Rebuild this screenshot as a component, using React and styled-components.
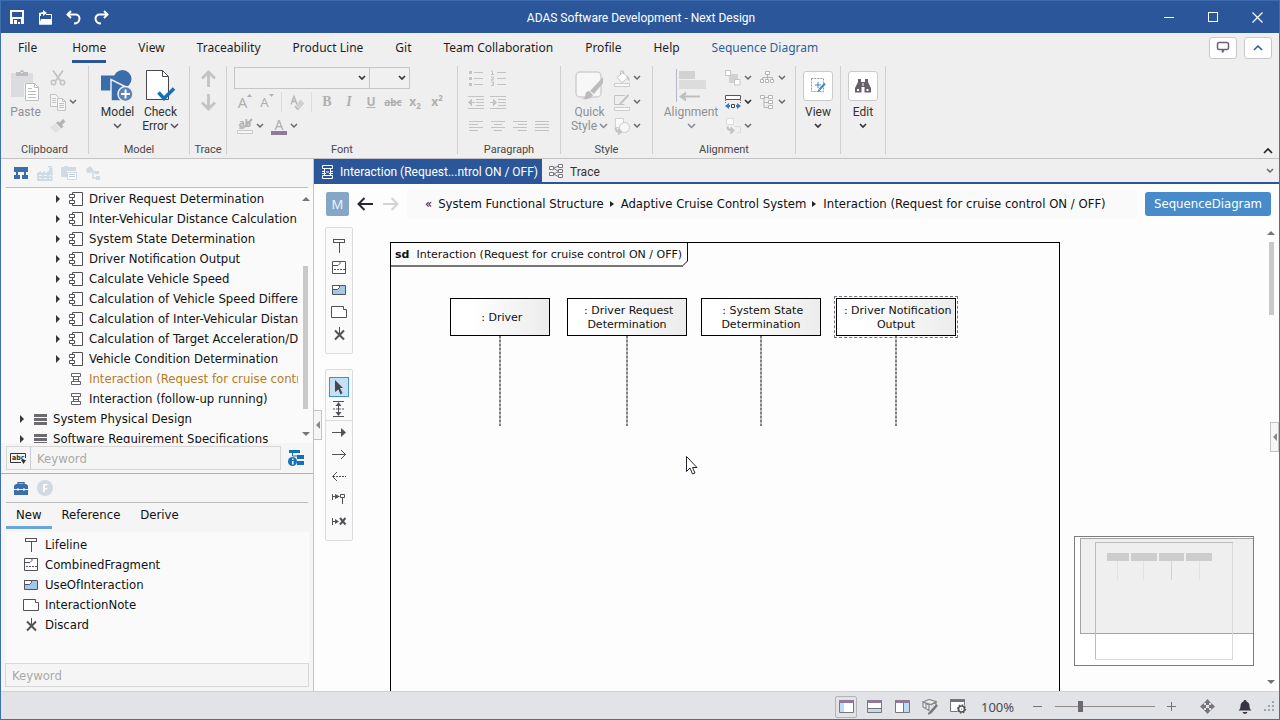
import React, {useState} from 'react';
import styled, {createGlobalStyle} from 'styled-components';

const UI = "'Noto Sans', 'Open Sans', sans-serif";
const RIBBON = "Roboto, 'Noto Sans', sans-serif";
const TEXT = "'DejaVu Sans Condensed', 'DejaVu Sans', sans-serif";
const DIAGRAM = "'DejaVu Sans', sans-serif";

const GlobalStyle = createGlobalStyle`
  * { box-sizing: border-box; }
  html, body, #root { height: 100%; }
  body { margin: 0; font: 12px/16px ${UI}; color: #1e1e1e; overflow: hidden; }
  button { border: 0; padding: 0; background: none; font: inherit; color: inherit; }
  input, select { font: inherit; color: inherit; outline: 0; }
  a { color: inherit; text-decoration: none; }
  ul, ol { margin: 0; padding: 0; list-style: none; }
  svg { display: block; flex: none; }
`;

/* ---------- icons: [width, height, drawing] ---------- */

const G = '#c3c3c3';
const GL = '#dadcdf';
const D = '#555057';
const B = '#3b6cab';

const line = (stroke, d, w = 1, extra = {}) => <path d={d} fill='none' stroke={stroke} strokeWidth={w} {...extra} />;
const fill = (color, d) => <path d={d} fill={color} />;
const crisp = {shapeRendering: 'crispEdges'};

const lifeline = (
  <>
    <rect x='1.5' y='0.5' width='11' height='3' fill='#fff' stroke={D} />
    {line(D, 'M7.5 4v10')}
  </>
);

const ICONS = {
  save: [14, 14, <>{fill('#fff', 'M0 0h14v14H0z')}{fill('#2b579a', 'M2 2h10v5H2zM3 9h8v5H3z')}{fill('#fff', 'M4 10h3v4H4zM8 12h2v2H8z')}</>],
  open: [15, 15, <>{line('#fff', 'M1.5 5v9h12V4.500H8', 1)}{fill('#fff', 'M3 9h11v5.500H1z M5 0l4 3-4 3V4H3v2H1V3l4-1z')}</>],
  undo: [15, 15, line('#fff', 'M5 1L1.500 4.500 5 8M2 4.500h7.500a4 4 0 0 1 4 4c0 3-2.500 5-5.500 5', 2)],
  redo: [15, 15, line('#fff', 'M10 1l3.500 3.500L10 8M13 4.500H5.500a4 4 0 0 0-4 4c0 3 2.500 5 5.500 5', 2)],
  min: [10, 10, line('#fff', 'M0 5.500h10', 1, crisp)],
  max: [11, 11, line('#fff', 'M0.500 0.500h9v9h-9z', 1, crisp)],
  close: [11, 11, line('#fff', 'M0.500 0.500l10 10M10.500 0.500l-10 10', 1.2)],
  chevron: [8, 6, line('#6a6572', 'M1 1l3 3 3-3', 1.5)],
  chevronDark: [8, 6, line('#39343f', 'M1 1l3 3 3-3', 1.7)],
  chevronBig: [9, 6, line('#55505a', 'M1 1l3.500 3.500L8 1', 1.5)],
  chevronBigOff: [9, 6, line('#8a878e', 'M1 1l3.500 3.500L8 1', 1.5)],
  chevronUp: [10, 6, line('#222', 'M1 5l4-4 4 4', 1.7)],
  chevronUpBlue: [10, 6, line('#2b579a', 'M1 5l4-4 4 4', 1.5)],
  comment: [14, 14, line('#6a6070', 'M3 1.500h8a1.500 1.500 0 0 1 1.500 1.500v4a1.500 1.500 0 0 1-1.500 1.500H8L6.500 11.500V8.500H3A1.500 1.500 0 0 1 1.500 7V3A1.500 1.500 0 0 1 3 1.500z', 1.5)],
  paste: [29, 32, <>
    {fill(GL, 'M0 3h22v10h-9v14H0z')}
    {fill('#bdbdbd', 'M5 2h4a2 2 0 0 1 4 0h4v4H5z')}
    {fill('#efefef', 'M10 2h2v1h-2z')}
    <path d='M14.500 13.500h9l4 4v13h-13z' fill='#fff' stroke='#bbb' />
    {line('#bbb', 'M23.500 13.500v4h4M17 18.500h4M17 21.500h8M17 24.500h8M17 27.500h8')}
  </>],
  cut: [16, 16, <>{line(G, 'M3 0.500l7.500 10.500M13 0.500L5.500 11', 1.8)}<circle cx='3.500' cy='12.500' r='2.200' fill='none' stroke={G} strokeWidth='1.500' /><circle cx='12.500' cy='12.500' r='2.200' fill='none' stroke={G} strokeWidth='1.500' /></>],
  copy: [17, 17, <>
    <path d='M0.500 0.500h5l3 3v9h-8z' fill='#f4f4f4' stroke={G} />
    {line(G, 'M2 4.500h4M2 6.500h4M2 8.500h4')}
    <path d='M7.500 4.500h5l3 3v9h-8z' fill='#f4f4f4' stroke={G} />
    {line(G, 'M12.500 4.500v3h3M9 9.500h5M9 11.500h5M9 13.500h5')}
  </>],
  brush: [16, 14, <>{fill('#b4b4b4', 'M13 0l2.500 2.500L12 6l1.500 1.500-2 2L6 4l2-2 1.500 1.500z')}{fill('#dfe1e4', 'M5 4.500l5.500 5.500L6 14 0 8.500z')}</>],
  model: [33, 32, <>
    <circle cx='21.500' cy='9' r='9' fill={B} />
    <path d='M0 5.500h16v15H0z' fill={B} />
    <path d='M10 31V9.500L28 18.500V31z' fill={B} stroke='#efefef' strokeWidth='1.500' />
    <path d='M20 31h12V24H20z' fill='#efefef' />
    <circle cx='24.500' cy='24' r='7.500' fill='#5b82b8' stroke='#efefef' strokeWidth='1.500' />
    {line('#fff', 'M24.500 19.500v9M20 24h9', 2)}
  </>],
  check: [30, 31, <>
    <path d='M0.500 0.500h16l6 6v23h-22z' fill='#fff' stroke='#4a454c' />
    {line('#4a454c', 'M16.500 0.500v6h6')}
    {line('#1670b8', 'M12.500 22.500l5.500 6L28 18.500', 3.5)}
  </>],
  up: [15, 17, line(G, 'M7.500 17V2M1 8.500L7.500 2 14 8.500', 2.8)],
  down: [15, 17, line(G, 'M7.500 0v15M1 8.500L7.500 15 14 8.500', 2.8)],
  eraser: [15, 15, <>{line('#b4b4b4', 'M1 9.500L4 1.500 7 9.500M2 6.500h4', 1.4)}<path d='M10.500 4.500l4 4-5 5.500L6 10z' fill='#d0d0d0' /><path d='M5.500 10.500l4 4-2 .5-3-3z' fill='#b9b9b9' /></>],
  highlight: [17, 16, <>{line('#b4b4b4', 'M15 1L8 8.500', 2)}{fill('#bdbdbd', 'M3 8.500l4-1.500 2 2-3 2H2z')}<path d='M0.500 12.500h15v3H0.500z' fill='#f6f6f6' stroke='#c8c8c8' /></>],
  fontBar: [16, 4, fill('#8f7b99', 'M0 0h16v4H0z')],
  growMark: [5, 3, fill('#b0b0b0', 'M0 3l2.500-3L5 3z')],
  shrinkMark: [5, 3, fill('#b0b0b0', 'M0 0l2.500 3L5 0z')],
  bullets: [14, 16, <>{fill(G, 'M0 1h3v3H0zM0 7h3v3H0zM0 13h3v3H0z')}{line(G, 'M5 2.500h9M5 8.500h9M5 14.500h9')}</>],
  numbers: [15, 16, <>{line(G, 'M0 1h1.500v3.500M0 4.500h3M0 7h2.500v1.500L0 10h3M0 12h2.500v3.500H0M1 13.800h1.500')}{line(G, 'M6 2.500h9M6 8.500h9M6 14.500h9')}</>],
  outdent: [16, 13, <g {...crisp}>{line(G, 'M0 0.500h16M0 12.500h16M8 3.500h8M8 6.500h8M8 9.500h8')}{fill(G, 'M0 6.500L4 3v3h3v1H4v3z')}</g>],
  indent: [16, 13, <g {...crisp}>{line(G, 'M0 0.500h16M0 12.500h16M8 3.500h8M8 6.500h8M8 9.500h8')}{fill(G, 'M7 6.500L3 3v3H0v1h3v3z')}</g>],
  left: [14, 11, line(G, 'M0 0.500h14M0 3.500h9M0 6.500h14M0 9.500h9', 1, crisp)],
  center: [14, 11, line(G, 'M0 0.500h14M3 3.500h8M0 6.500h14M3 9.500h8', 1, crisp)],
  right: [14, 11, line(G, 'M0 0.500h14M5 3.500h9M0 6.500h14M5 9.500h9', 1, crisp)],
  justify: [14, 11, line(G, 'M0 0.500h14M0 3.500h14M0 6.500h14M0 9.500h14', 1, crisp)],
  quick: [29, 30, <>
    <rect x='1' y='1' width='25' height='25' rx='4' fill='#f7f7f8' stroke='#cfd0d2' strokeWidth='1.500' />
    {fill('#bcbcbe', 'M28 6v6L19 23l-4-3z')}
    {fill('#bcbcbe', 'M14 20l4 4c-2 4-6 5-11 4 3-1 3-2 3.500-5 .5-2 2-3 3.500-3z')}
  </>],
  fillColor: [17, 17, <><path d='M3 7.500l6-5 5 5-6 5z' fill='#fff' stroke={G} /><path d='M6.500 5V1h3v3' fill='none' stroke={G} />{fill(G, 'M12 5l3.500 3v4l-2-3z')}<path d='M0.500 13.500h15v3H0.500z' fill='#f8f8f8' stroke='#ccc' /></>],
  lineColor: [17, 17, <><path d='M11 1.500H0.500v9h10' fill='none' stroke={G} />{line(G, 'M14.500 1L7.500 8.500', 2)}{fill(G, 'M5 11l1-3.500 2.500 2z')}<path d='M0.500 13.500h15v3H0.500z' fill='#f8f8f8' stroke='#ccc' /></>],
  shape: [17, 17, <><path d='M1.500 0.500h8v9h-8z' fill='#fafafa' stroke='#d0d0d0' /><circle cx='10.500' cy='9.500' r='5' fill='#f7f7f7' stroke='#ccc' />{line(G, 'M1.500 9.500c0 3 2 4.500 4.500 4.500M4 11l3 3-3 2.500', 2)}</>],
  alignment: [31, 33, <>
    {line('#b4b8c4', 'M0.500 0v33', 1, crisp)}
    {fill('#d2d2d2', 'M3 2h16v8H3z')}{fill('#dcdcdc', 'M3 11h27v9H3z')}
    {line('#bebebe', 'M24 27.500H5', 2)}{fill('#bebebe', 'M3 27.500l7-5v3l-2 2 2 2v3z')}
  </>],
  arrange: [16, 16, <>{fill('#d2d2d2', 'M4 4h9v9H4z')}<path d='M0.500 0.500h5v5h-5zM9.500 9.500h5.500v5.500H9.500z' fill='#fff' stroke='#c6c6c6' /></>],
  sameWidth: [17, 15, <><path d='M0.500 0.500h15v4h-15z' fill='#fff' stroke='#555' />{line('#777', 'M0.500 5v4M15.500 5v4', 1, {strokeDasharray: '1 1'})}<path d='M6.500 9.500h3v3h-3z' fill='#fff' stroke='#444' />{fill('#3e77b8', 'M0 11l4-3v2h1v2H4v2zM16 11l-4-3v2h-1v2h1v2z')}</>],
  routing: [17, 16, <><path d='M1.500 0.500h7v6h-7z' fill='#fafafa' stroke='#dcdcdc' />{line(G, 'M2.500 8.500c0 3 2 4 5 4M5.500 9.500l3 3-3 3', 2)}{line('#dcdcdc', 'M9.500 8.500h6v6h-3')}</>],
  hierarchy: [15, 14, <><path d='M5.500 0.500h4v3h-4zM0.500 8.500h3v3h-3zM5.500 8.500h3v3h-3zM10.500 8.500h3v3h-3z' fill='#fff' stroke='#b4b4b4' />{line('#b4b4b4', 'M7.500 4v4M2.500 8V6.500h10V8')}</>],
  tree: [15, 15, <><path d='M0.500 0.500h4v3h-4zM8.500 0.500h4v3h-4zM8.500 5.500h4v3h-4zM8.500 10.500h4v3h-4z' fill='#fff' stroke='#b4b4b4' />{line('#b4b4b4', 'M4.500 2.500h4M4 2v10.500h4.500M4 7.500h4')}</>],
  view: [17, 17, <><path d='M1.500 1.500h12v13h-12z' fill='#fff' stroke='#9a98a4' strokeDasharray='2 1' />{line('#3e86c4', 'M8 5v6M5 8h6', 1)}{line('#3e86c4', 'M15 6.500L9.500 12.500', 2)}{fill('#3e86c4', 'M7.500 15l1-3 2 2z')}</>],
  edit: [16, 14, <>{fill('#65606a', 'M3 0h3v3h4V0h3v3l3 6v4.500H9.500V8h-3v5.500H0V9l3-6z')}{fill('#fff', 'M2 10h2v2H2zM11.500 10h2v2h-2zM7.500 4h1v3h-1z')}</>],
  orgBlue: [14, 12, fill(B, 'M0 0h14v5h-2v3h2v4H8V8h2V5H4v3h2v4H0V8h2V5H0z')],
  factory: [16, 15, <>{fill('#cfdae3', 'M0 15V7l4-2v2l4-2v2l4-2 .5-3h3V15z M11 0h4v1.500h-4z')}{line('#f2f5f8', 'M2 9.500h3M7 9.500h3M12 9.500h2M2 12.500h3M7 12.500h3M12 12.500h2')}</>],
  docs: [16, 14, <>{fill('#cfdae3', 'M0 1h3V0h4v1h8v4H6v6H0z')}<path d='M6.500 6.500h9v7h-9z' fill='#fff' stroke='#cfdae3' />{line('#b9cad8', 'M8 8.500h6M8 10.500h6')}</>],
  model3: [15, 14, <>{fill('#cfdae3', 'M0 3l4-3 3 3-2 4H1zM9 5h4v3H9zM10 10h4v4h-4z')}{line('#cfdae3', 'M5 4l5 3M7 6v6h4', 1.5)}</>],
  block: [15, 15, <><path d='M3.500 0.500h10v13h-10z' fill='#fff' stroke={D} /><path d='M0.500 2.500h5v3h-5zM0.500 8.500h5v3h-5z' fill='#fff' stroke={D} /></>],
  seq: [12, 12, <><path d='M1.500 0.500h9v3h-9zM1.500 8.500h9v3h-9z' fill='#fff' stroke='#66616a' />{line('#66616a', 'M3.500 4v4M8.500 4v4M3 6.500h6')}</>],
  seqLight: [13, 14, <><path d='M1.500 0.500h10v3h-10zM1.500 10.500h10v3h-10z' fill='none' stroke='#fff' />{line('#fff', 'M1 6.500h3M9 6.500h3M1 8.500h4M8 8.500h4M3.500 4v6M9.500 4v6M5 7h3')}</>],
  model4: [13, 11, fill('#6d6a70', 'M0 0h13v3H0zM0 4h13v3H0zM0 8h13v3H0z')],
  traceTab: [15, 15, <><path d='M0.500 2.500h4v3h-4zM0.500 8.500h4v3h-4zM9.500 0.500h4v3h-4zM9.500 5.500h4v3h-4zM9.500 10.500h4v3h-4z' fill='#fff' stroke='#77727c' />{line('#77727c', 'M5 4l4.500-2M5 4.500l4.500 3M5 10l4.500-2.500M5 10.500l4.500 2')}</>],
  abc: [17, 13, <><path d='M15.500 6V1.500H0.500v9H11' fill='none' stroke='#333' /><text x='2' y='8' fontSize='7' fontWeight='700' fontFamily='DejaVu Sans Condensed' fill='#333'>abc</text>{fill('#333', 'M11 8h5l-2.500 4z')}</>],
  treeInfo: [16, 16, <>{fill('#1670b8', 'M1 0h11v3H1zM9 5h7v4H9zM9 11h7v4H9z')}{line('#1670b8', 'M4.500 3v3h5', 1)}<circle cx='4.500' cy='11.500' r='4.500' fill='#1670b8' />{fill('#fff', 'M4 8.500h1.500V10H4zM4 11h1.500v3.500H4z')}</>],
  toolbox: [14, 13, <>{line(B, 'M4 2V0.700h6V2', 1.4)}{fill(B, 'M0 3.500L2 2h10l2 1.500V7H0zM0 8h14v5H0z')}{fill('#fff', 'M3 6.500h2v2H3zM9 6.500h2v2H9z')}</>],
  lifeline: [15, 15, lifeline],
  fragment: [15, 14, <><path d='M0.500 0.500h13v12h-13z' fill='#fff' stroke={D} />{line(D, 'M1 4.500h5l2-2v-2')}{line(D, 'M2 8.500h11', 1, {strokeDasharray: '2 1'})}</>],
  useOf: [15, 11, <><path d='M0.500 0.500h13v9h-13z' fill='#a3c8e8' stroke={D} /><path d='M0.500 0.500h7v2l-2 2h-5z' fill='#fff' stroke={D} /></>],
  note: [16, 13, <path d='M0.500 0.500h12v3h3v8h-15z' fill='#fff' stroke={D} />],
  discard: [13, 14, <>{line(D, 'M2 3.500l9 9M11 3.500l-9 9', 2)}{line(D, 'M6.500 0v8')}</>],
  pointer: [10, 15, fill('#4a454c', 'M1 0l8 8H6l2.500 5-2 1.500L4.500 9.500 1 12z')],
  space: [12, 16, <>{line(D, 'M0 0.500h11M0 15.500h11M5.500 2v12')}{line(D, 'M0 8h11', 1, {strokeDasharray: '2 1'})}{fill(D, 'M5.500 1l3 4h-6zM5.500 15l3-4h-6z')}</>],
  sync: [15, 10, <>{line(D, 'M0 4.500h10')}{fill(D, 'M9 0L14 4.500 9 9z')}</>],
  async: [15, 10, line(D, 'M0 4.500h13.500M9 0L13.500 4.500 9 9')],
  reply: [15, 10, <>{line(D, 'M1 4.500h13', 1, {strokeDasharray: '2 1'})}{line(D, 'M5 0L0.500 4.500 5 9')}</>],
  create: [14, 12, <>{line(D, 'M0.500 1v6M0 3.500h4M8.500 1.500h4v3h-4zM10.500 5v6')}{fill(D, 'M3 1l5 2.500L3 6z')}</>],
  destroy: [14, 9, <>{line(D, 'M0.500 1v7M0 4.500h4')}{fill(D, 'M3 2l4 2.500L3 7z')}{line(D, 'M8 1l5.500 6.500M13.500 1L8 7.500', 2)}</>],
  back: [17, 14, line('#2a2530', 'M16 7H1.500M7.500 1l-6 6 6 6', 2)],
  forward: [17, 14, line('#d4d4d4', 'M1 7h14.500M9.500 1l6 6-6 6', 2)],
  caret: [5, 8, fill('#39343f', 'M0 0l4 4-4 4z')],
  crumb: [4, 6, fill('#222', 'M0 0l4 3-4 3z')],
  scrollUp: [8, 4, fill('#77727c', 'M4 0l4 4H0z')],
  scrollDown: [8, 4, fill('#77727c', 'M0 0h8L4 4z')],
  collapse: [4, 8, fill('#8a878e', 'M4 0v8L0 4z')],
  cursor: [12, 19, <path d='M0.500 0.500v15l3.500-3.500 2.500 6 2.500-1-2.500-5.500h4.500z' fill='#fff' stroke='#2a2530' />],
  paneLeft: [15, 13, <><path d='M0.500 0.500h14v12h-14z' fill='#fff' stroke='#777' />{fill('#8f7b99', 'M0 0h15v3H0z')}{fill('#bfdcf0', 'M1 3h4v9H1z')}</>],
  paneBottom: [15, 13, <><path d='M0.500 0.500h14v12h-14z' fill='#fff' stroke='#777' />{fill('#8f7b99', 'M0 0h15v3H0z')}{fill('#bfdcf0', 'M1 9h13v3H1z')}{line('#777', 'M1 8.500h13')}</>],
  paneRight: [15, 13, <><path d='M0.500 0.500h14v12h-14z' fill='#fff' stroke='#777' />{fill('#8f7b99', 'M0 0h15v3H0z')}{fill('#bfdcf0', 'M9 3h5v9H9z')}{line('#777', 'M8.500 3v9')}</>],
  cubes: [17, 16, <><path d='M1 3l6-2.500 7 2-5 3zM1 3v5l6 3.500V6zM4 5v4M9 6l5-3v3' fill='#ececec' stroke='#8a8a8a' strokeWidth='1.200' />{line('#77727c', 'M15 6l-7 8', 2.6)}{fill('#77727c', 'M6 16l.5-3 2.500 1.500z')}</>],
  gearPane: [17, 15, <><path d='M7 12.500H0.500v-12h14v6' fill='#fff' stroke='#777' />{fill('#77727c', 'M0 0h15v3H0z')}<circle cx='11.500' cy='10' r='3' fill='#fff' stroke='#555' strokeWidth='1.600' /><circle cx='11.500' cy='10' r='4' fill='none' stroke='#555' strokeDasharray='1.500 1.600' strokeWidth='1.400' />{fill('#555', 'M11 9.500h1v1h-1z')}</>],
  minus: [9, 9, line('#77727c', 'M0 4.500h9', 1, crisp)],
  plus: [9, 9, line('#77727c', 'M0 4.500h9M4.500 0v9', 1, crisp)],
  move: [15, 15, fill('#77747c', 'M7.500 0l3.500 4H9v2H6V4H4zM7.500 15l3.500-4H9V9H6v2H4zM0 7.500L4 4v2h2v3H4v2zM15 7.500L11 4v2H9v3h2v2z')],
  bell: [14, 14, fill('#3a3542', 'M7 0c1 0 1.500.6 1.500 1.500C10.500 2 11.500 4 11.500 6c0 2 .5 3 2 4.500H.5C2 9 2.500 8 2.500 6c0-2 1-4 3-4.500C5.500.6 6 0 7 0zM4.500 12h5c-.5 1.300-1.500 2-2.500 2s-2-.7-2.500-2z')],
  grip: [11, 11, fill('#9aa5b4', 'M8 0h2v2H8zM8 4h2v2H8zM8 8h2v2H8zM4 4h2v2H4zM4 8h2v2H4zM0 8h2v2H0z')],
};

const Icon = ({n}) => {
  const [w, h, art] = ICONS[n];
  return (
    <svg width={w} height={h} viewBox={`0 0 ${w} ${h}`} aria-hidden='true'>
      {art}
    </svg>
  );
};

/* ---------- window frame ---------- */

const Window = styled.div`
  display: flex;
  flex-direction: column;
  height: 100%;
  border: 1px solid #4070b0;
  border-top: 0;
  background: #efefef;
`;

const TitleBar = styled.header`
  display: grid;
  grid-template-columns: 1fr auto 1fr;
  align-items: center;
  height: 33px;
  flex: none;
  padding-left: 2px;
  background: #2b579a;
  border-top: 1px solid #3d6bb0;
  color: #fff;
`;

const BarButtons = styled.div`
  display: flex;
  justify-content: ${(p) => (p.$end ? 'flex-end' : 'flex-start')};
`;

const BarButton = styled.button`
  display: grid;
  place-items: center;
  width: ${(p) => (p.$wide ? 44 : 28)}px;
  height: 32px;
`;

const Title = styled.h1`
  margin: 0;
  padding-top: 2px;
  font: 12px/16px ${RIBBON};
`;

const MenuRow = styled.nav`
  display: flex;
  align-items: stretch;
  height: 30px;
  flex: none;
  padding: 0 7px 0 17px;
`;

const MenuList = styled.ul`
  display: flex;
  flex: 1;
  gap: 32px;
  li:first-child { margin-right: 3px; }
`;

const MenuLink = styled.a`
  display: block;
  height: 30px;
  padding-top: 7px;
  color: ${(p) => (p.$blue ? '#2f5f9f' : '#1e1e1e')};
  border-bottom: 3px solid ${(p) => (p.$active ? '#2b579a' : 'transparent')};
`;

const MenuButtons = styled.div`
  display: flex;
  gap: 7px;
  padding-top: 4px;
`;

const FramedButton = styled.button`
  display: grid;
  place-items: center;
  width: 28px;
  height: 22px;
  background: #fff;
  border: 1px solid #c8c8c8;
  border-radius: 3px;
`;

/* ---------- ribbon ---------- */

const Ribbon = styled.section`
  display: flex;
  flex: none;
  height: 96px;
  padding: 3px 6px 4px 0;
  border-bottom: 1px solid #c3c3c3;
`;

const GroupBox = styled.div`
  display: flex;
  flex-direction: column;
  width: ${(p) => p.$w}px;
  border-right: 1px solid #d0d0d0;
`;

const GroupBody = styled.div`
  display: flex;
  flex: none;
  height: 72px;
  padding-left: ${(p) => (p.$center ? 0 : p.$tight ? 3 : 7)}px;
  justify-content: ${(p) => (p.$center ? 'center' : 'flex-start')};
`;

const GroupLabel = styled.div`
  flex: none;
  margin-top: 4px;
  text-align: center;
  font: 11px/16px ${RIBBON};
  color: #484848;
`;

const Group = ({label, w, center, tight, children}) => (
  <GroupBox $w={w}>
    <GroupBody $center={center} $tight={tight}>{children}</GroupBody>
    <GroupLabel>{label}</GroupLabel>
  </GroupBox>
);

const BigButtonBox = styled.button`
  display: flex;
  flex-direction: column;
  align-items: center;
  width: ${(p) => (p.$wide ? 62 : 43)}px;
  height: 68px;
  font: 12px/14px ${RIBBON};
  color: ${(p) => (p.$off ? '#8f8f93' : '#333')};
`;

const BigIcon = styled.span`
  display: grid;
  place-items: center;
  height: 39px;
`;

const IconFrame = styled.span`
  display: grid;
  place-items: center;
  width: 30px;
  height: 30px;
  background: #fff;
  border: 1px solid #cbcbcf;
  border-radius: 3px;
`;

const LabelLine = styled.span`
  display: flex;
  align-items: center;
  gap: 2px;
  height: 14px;
`;

const BigButton = ({icon, label, second, chevron, off, wide, framed}) => (
  <BigButtonBox $off={off} $wide={wide} disabled={off}>
    <BigIcon>{framed ? <IconFrame><Icon n={icon} /></IconFrame> : <Icon n={icon} />}</BigIcon>
    <LabelLine>{label}</LabelLine>
    {(second || chevron) && (
      <LabelLine>
        {second}
        {chevron && <Icon n={framed ? 'chevronDark' : off ? 'chevronBigOff' : 'chevronBig'} />}
      </LabelLine>
    )}
  </BigButtonBox>
);

const Stack = styled.div`
  display: flex;
  flex-direction: column;
  margin-right: ${(p) => (p.$gap ? 4 : 0)}px;
`;

const Row = styled.div`
  display: flex;
  align-items: center;
  height: 24px;
`;

const SmallButton = styled.button`
  display: grid;
  place-items: center;
  width: 22px;
  height: 24px;
  line-height: 16px;
  color: #b0b0b0;
`;

const DropButton = styled(SmallButton)`
  width: 8px;
  margin-right: ${(p) => (p.$gap ? 4 : 0)}px;
`;

const Letter = styled.span`
  font: ${(p) => (p.$bold ? 'bold ' : '')}${(p) => (p.$italic ? 'italic ' : '')}${(p) => p.$size || 14}px/16px
    ${(p) => (p.$serif ? "'Liberation Serif', serif" : UI)};
  text-decoration: ${(p) => p.$line || 'none'};
  sup, sub { font-size: 8px; line-height: 0; }
`;

const SizeLetter = styled.span`
  display: flex;
  align-items: flex-start;
`;

const LetterOver = styled.span`
  display: grid;
  justify-items: center;
  span { line-height: 13px; }
`;

const Mark = styled.span`
  display: grid;
  grid-template-areas: 'a';
  font: bold 10px/10px ${UI};
  > * { grid-area: a; }
`;

const Divider = styled.span`
  width: 1px;
  height: 20px;
  margin: 0 4px 0 3px;
  background: #dcdcdc;
`;

const Combo = styled.label`
  display: grid;
  grid-template-areas: 'a';
  align-items: center;
  width: ${(p) => (p.$narrow ? 41 : 136)}px;
  height: 22px;
  margin-left: ${(p) => (p.$narrow ? -1 : 0)}px;
  border: 1px solid #c6c6c8;
  background: #f0f0f0;
  > * { grid-area: a; }
  svg { justify-self: end; margin-right: 3px; pointer-events: none; }
`;

const PlainSelect = styled.select`
  appearance: none;
  width: 100%;
  height: 20px;
  border: 0;
  background: transparent;
`;

const RibbonEnd = styled.div`
  flex: 1;
  display: flex;
  align-items: flex-end;
  justify-content: flex-end;
`;

const Small = ({icon, name, drop, dark, gap}) => (
  <>
    <SmallButton aria-label={name || icon}>
      <Icon n={icon} />
    </SmallButton>
    {drop && (
      <DropButton $gap={gap} aria-label={`${name || icon} options`}>
        <Icon n={dark ? 'chevronDark' : 'chevron'} />
      </DropButton>
    )}
  </>
);

/* ---------- left side ---------- */

const Main = styled.main`
  display: flex;
  flex: 1;
  min-height: 0;
`;

const Side = styled.aside`
  display: flex;
  flex-direction: column;
  width: 313px;
  flex: none;
  background: #f5f5f6;
  border-right: 1px solid #c3c3c3;
  font: 13px/20px ${TEXT};
  color: #111;
`;

const PaneBar = styled.div`
  display: flex;
  align-items: center;
  height: 29px;
  flex: none;
  margin: 0 5px;
  padding-left: 4px;
  gap: 2px;
  border-bottom: 1px solid #bdbdbd;
`;

const TreeWrap = styled.div`
  display: flex;
  height: 255px;
  flex: none;
  background: #fafafa;
`;

const Tree = styled.ul`
  flex: 1;
  min-width: 0;
  padding-top: 1px;
  overflow: hidden;
`;

const TreeItem = styled.li`
  display: grid;
  grid-template-columns: 13px 20px 1fr;
  align-items: center;
  height: 20px;
  padding-left: ${(p) => (p.$deep ? 55 : 19)}px;
  white-space: nowrap;
  color: ${(p) => (p.$current ? '#b87a1e' : '#111')};
  > span { overflow: hidden; }
`;

const IconCell = styled.span`
  display: grid;
  place-items: center start;
  padding-left: ${(p) => (p.$inset ? 1 : 0)}px;
`;

const ScrollTrack = styled.div`
  display: flex;
  flex-direction: column;
  align-items: center;
  justify-content: space-between;
  flex: none;
  width: ${(p) => (p.$wide ? 16 : 15)}px;
  padding: ${(p) => (p.$wide ? '8px 0 7px' : '9px 0 7px')};
`;

const ScrollThumb = styled.div`
  width: 5px;
  height: ${(p) => p.$h}px;
  margin-top: ${(p) => p.$top}px;
  margin-bottom: auto;
  background: #c9c9cb;
`;

const SearchRow = styled.div`
  display: flex;
  align-items: center;
  height: 31px;
  flex: none;
  padding: 0 9px 0 5px;
  gap: 7px;
  border-bottom: 1px solid #b0b0b0;
`;

const SearchBox = styled.div`
  display: flex;
  align-items: center;
  flex: 1;
  height: 24px;
  border: 1px solid #d6d6d6;
`;

const AbcButton = styled.button`
  display: grid;
  place-items: center;
  width: 24px;
  height: 22px;
  border-right: 1px solid #c8ccd4;
`;

const KeywordInput = styled.input`
  min-width: 0;
  height: 24px;
  padding: 0 6px;
  background: transparent;
  border: ${(p) => (p.$boxed ? '1px solid #d8d8d8' : '0')};
  margin: ${(p) => (p.$boxed ? '0 4px 4px' : '0')};
  flex: ${(p) => (p.$boxed ? 'none' : '1')};
  &::placeholder { color: #a9a9a6; opacity: 1; }
`;

const FunctionBadge = styled.span`
  display: grid;
  place-items: center;
  width: 16px;
  height: 16px;
  border-radius: 8px;
  background: #cfdae3;
  color: #fff;
  font: bold 10px/16px ${UI};
`;

const PaneTabs = styled.div`
  display: flex;
  flex: none;
  height: 26px;
  margin-left: 5px;
`;

const PaneTab = styled.button`
  height: 26px;
  padding: 0 10px;
  line-height: 20px;
  border-bottom: 3px solid ${(p) => (p.$active ? '#6aa6d8' : 'transparent')};
`;

const ToolList = styled.ul`
  flex: 1;
  margin: 3px 4px 0 5px;
  padding-top: 3px;
  background: #fafafa;
`;

const ToolItem = styled.li`
  display: grid;
  grid-template-columns: 28px 1fr;
  align-items: center;
  height: 20px;
  padding-left: 11px;
  svg { justify-self: center; }
`;

/* ---------- editor ---------- */

const Editor = styled.section`
  position: relative;
  display: flex;
  flex-direction: column;
  flex: 1;
  min-width: 0;
  background: #fdfdfd;
`;

const DocTabs = styled.div`
  display: flex;
  height: 25px;
  flex: none;
  background: #efefef;
  border-bottom: 2px solid #2b579a;
`;

const DocTab = styled.button`
  display: flex;
  align-items: center;
  gap: 6px;
  padding: 2px 4px 0 7px;
  font: 12px/16px ${RIBBON};
  color: ${(p) => (p.$active ? '#fff' : '#333')};
  background: ${(p) => (p.$active ? '#2b579a' : 'transparent')};
`;

const TabsMore = styled.button`
  margin-left: auto;
  padding-right: 5px;
`;

const NavRow = styled.div`
  display: flex;
  align-items: center;
  height: 39px;
  flex: none;
  padding: 0 8px 0 12px;
  gap: 8px;
  font: 13px/20px ${TEXT};
  color: #111;
`;

const ModelBadge = styled.button`
  width: 23px;
  height: 24px;
  border-radius: 2px;
  background: #85a6c6;
  color: #eef5fb;
  font: 13px/24px ${UI};
`;

const Crumbs = styled.ol`
  display: flex;
  align-items: center;
  flex: 1;
  gap: 6px;
  height: 30px;
  padding-left: 18px;
  background: #fafafa;
  border-radius: 3px;
  white-space: nowrap;
  li { display: flex; align-items: center; gap: 7px; }
`;

const TypeButton = styled.button`
  height: 24px;
  padding: 0 9px;
  border-radius: 3px;
  background: #478bca;
  color: #fff;
`;

const Workspace = styled.div`
  display: flex;
  flex: 1;
  min-height: 0;
`;

const Palettes = styled.div`
  display: flex;
  flex-direction: column;
  flex: none;
  gap: 15px;
  padding: 4px 0 0 11px;
  width: 76px;
`;

const Palette = styled.div`
  display: flex;
  flex-direction: column;
  width: 28px;
  padding: ${(p) => (p.$tall ? '6px 0 8px' : '7px 0 8px')};
  background: #fafafa;
  border: 1px solid #dcdcde;
  border-radius: 2px;
`;

const PaletteButton = styled.button`
  display: grid;
  place-items: center;
  align-self: center;
  width: 20px;
  height: ${(p) => (p.$picked ? 20 : 22)}px;
  margin: ${(p) => (p.$picked ? '1px 0' : '0')};
  border: ${(p) => (p.$picked ? '1px solid #3e8fd0' : '0')};
  background: ${(p) => (p.$picked ? '#c5dff3' : 'transparent')};
`;

const PaletteRule = styled.div`
  height: 1px;
  margin-bottom: 1px;
  background: #dcdcde;
`;

const Canvas = styled.div`
  position: relative;
  flex: 1;
  min-width: 0;
  overflow: hidden;
  font: 11px/14px ${DIAGRAM};
  color: #111;
`;

const Frame = styled.div`
  position: absolute;
  left: 0;
  top: 19px;
  width: 670px;
  height: 900px;
  border: 1px solid #000;
`;

const FrameTitle = styled.div`
  position: absolute;
  left: 0;
  top: 0;
  display: grid;
  grid-template-areas: 'a';
  align-items: center;
  width: 298px;
  height: 24px;
  > * { grid-area: a; }
  p { margin: 0; padding-left: 4px; white-space: pre; }
  b { margin-right: 7px; }
`;

const Lifeline = styled.div`
  position: absolute;
  top: 75px;
  left: ${(p) => p.$x}px;
  width: ${(p) => p.$w}px;
  display: flex;
  flex-direction: column;
  align-items: center;
`;

const LifelineHead = styled.div`
  display: grid;
  place-items: center;
  width: 100%;
  height: 38px;
  padding-top: 2px;
  border: 1px solid #000;
  background: linear-gradient(90deg, #fff 20%, #ececec);
  text-align: center;
  white-space: pre;
  outline: ${(p) => (p.$selected ? '1px dashed #77727c' : 'none')};
  outline-offset: 1px;
`;

const LifelineStem = styled.div`
  width: 2px;
  height: 90px;
  background: repeating-linear-gradient(#808080 0 2px, #c0c0c0 2px 4px);
`;

const Pointer = styled.div`
  position: absolute;
  left: 296px;
  top: 233px;
`;

const MiniMap = styled.div`
  position: absolute;
  right: 25px;
  bottom: 25px;
`;

const Handle = styled.button`
  position: absolute;
  ${(p) => (p.$right ? 'right: 0; top: 263px;' : 'left: -1px; top: 251px;')}
  display: grid;
  place-items: center;
  width: 9px;
  height: 30px;
  background: #f6f6f7;
  border: 1px solid #c3c3c3;
`;

/* ---------- status bar ---------- */

const StatusBar = styled.footer`
  display: flex;
  align-items: center;
  justify-content: flex-end;
  height: 28px;
  flex: none;
  padding: 2px 4px 0 0;
  background: #e1e3e6;
  border-top: 1px solid #d2d2d4;
  font: 13px/16px ${UI};
  color: #4a4a50;
`;

const StatusButton = styled.button`
  display: grid;
  place-items: center;
  width: ${(p) => (p.$wide ? 38 : 22)}px;
  height: 22px;
  margin-right: ${(p) => (p.$wide ? 0 : 6)}px;
  border: ${(p) => (p.$on ? '1px solid #b4b4b6' : '0')};
  border-radius: 2px;
`;

const ZoomLabel = styled.span`
  width: 51px;
  padding-left: 6px;
`;

const Slider = styled.input`
  appearance: none;
  width: 100px;
  height: 12px;
  margin: 0 5px 0 1px;
  background: linear-gradient(#8f8c88, #8f8c88) center / 100% 1px no-repeat;
  &::-webkit-slider-thumb {
    appearance: none;
    width: 5px;
    height: 11px;
    background: #6d6a72;
  }
`;

const menus = [
  'File', 'Home', 'View', 'Traceability', 'Product Line', 'Git', 'Team Collaboration', 'Profile', 'Help', 'Sequence Diagram',
];

const blocks = [
  'Driver Request Determination',
  'Inter-Vehicular Distance Calculation',
  'System State Determination',
  'Driver Notification Output',
  'Calculate Vehicle Speed',
  'Calculation of Vehicle Speed Difference',
  'Calculation of Inter-Vehicular Distance',
  'Calculation of Target Acceleration/Deceleration',
  'Vehicle Condition Determination',
];

const tools = [
  ['lifeline', 'Lifeline'],
  ['fragment', 'CombinedFragment'],
  ['useOf', 'UseOfInteraction'],
  ['note', 'InteractionNote'],
  ['discard', 'Discard'],
];

const lifelines = [
  {x: 60, w: 100, text: ' : Driver'},
  {x: 177, w: 120, text: ' : Driver Request\nDetermination'},
  {x: 311, w: 120, text: ' : System State\nDetermination'},
  {x: 446, w: 120, text: ' : Driver Notification\nOutput', selected: true},
];

const RibbonBar = () => (
  <Ribbon>
    <Group label='Clipboard' w={88} tight>
      <BigButton icon='paste' label='Paste' off />
      <Stack>
        <Row><Small icon='cut' name='Cut' /></Row>
        <Row><Small icon='copy' name='Copy' drop /></Row>
        <Row><Small icon='brush' name='Format painter' /></Row>
      </Stack>
    </Group>
    <Group label='Model' w={101}>
      <BigButton icon='model' label='Model' chevron />
      <BigButton icon='check' label='Check' second='Error' chevron />
    </Group>
    <Group label='Trace' w={37} center>
      <Stack>
        <Row><Small icon='up' name='Trace up' /></Row>
        <Row><Small icon='down' name='Trace down' /></Row>
      </Stack>
    </Group>
    <Group label='Font' w={231}>
      <Stack>
        <Row>
          <Combo>
            <PlainSelect aria-label='Font name' />
            <Icon n='chevronDark' />
          </Combo>
          <Combo $narrow>
            <PlainSelect aria-label='Font size' />
            <Icon n='chevronDark' />
          </Combo>
        </Row>
        <Row>
          <SmallButton aria-label='Grow font'>
            <SizeLetter><Letter $size={15}>A</Letter><Icon n='growMark' /></SizeLetter>
          </SmallButton>
          <SmallButton aria-label='Shrink font'>
            <SizeLetter><Letter $size={13}>A</Letter><Icon n='shrinkMark' /></SizeLetter>
          </SmallButton>
          <Divider />
          <Small icon='eraser' name='Clear formatting' />
          <Divider />
          <SmallButton><Letter $bold $serif>B</Letter></SmallButton>
          <SmallButton><Letter $bold $italic $serif>I</Letter></SmallButton>
          <SmallButton><Letter $bold $size={12} $line='underline'>U</Letter></SmallButton>
          <SmallButton><Letter $bold $size={10} $line='line-through'>abc</Letter></SmallButton>
          <SmallButton><Letter $bold $size={12}>x<sub>2</sub></Letter></SmallButton>
          <SmallButton><Letter $bold $size={12}>x<sup>2</sup></Letter></SmallButton>
        </Row>
        <Row>
          <SmallButton aria-label='Highlight'>
            <Mark>
              <span>ab</span>
              <Icon n='highlight' />
            </Mark>
          </SmallButton>
          <DropButton $gap aria-label='Highlight options'><Icon n='chevron' /></DropButton>
          <SmallButton aria-label='Font color'>
            <LetterOver>
              <Letter>A</Letter>
              <Icon n='fontBar' />
            </LetterOver>
          </SmallButton>
          <DropButton aria-label='Font color options'><Icon n='chevron' /></DropButton>
        </Row>
      </Stack>
    </Group>
    <Group label='Paragraph' w={103}>
      <Stack>
        <Row><Small icon='bullets' /><Small icon='numbers' /></Row>
        <Row><Small icon='outdent' /><Small icon='indent' /></Row>
        <Row><Small icon='left' /><Small icon='center' /><Small icon='right' /><Small icon='justify' /></Row>
      </Stack>
    </Group>
    <Group label='Style' w={92}>
      <BigButton icon='quick' label='Quick' second='Style' chevron off />
      <Stack>
        <Row><Small icon='fillColor' name='Fill' drop /></Row>
        <Row><Small icon='lineColor' name='Line' drop /></Row>
        <Row><Small icon='shape' name='Shape' drop /></Row>
      </Stack>
    </Group>
    <Group label='Alignment' w={143}>
      <BigButton icon='alignment' label='Alignment' chevron off wide />
      <Stack $gap>
        <Row><Small icon='arrange' name='Arrange' drop /></Row>
        <Row><Small icon='sameWidth' name='Same width' drop dark /></Row>
        <Row><Small icon='routing' name='Routing' drop /></Row>
      </Stack>
      <Stack>
        <Row><Small icon='hierarchy' name='Hierarchy' drop /></Row>
        <Row><Small icon='tree' name='Tree' drop /></Row>
      </Stack>
    </Group>
    <Group label='' w={45} center>
      <BigButton icon='view' label='View' chevron framed />
    </Group>
    <Group label='' w={45} center>
      <BigButton icon='edit' label='Edit' chevron framed />
    </Group>
    <RibbonEnd>
      <button aria-label='Collapse ribbon'><Icon n='chevronUp' /></button>
    </RibbonEnd>
  </Ribbon>
);

const SidePanel = () => {
  const [keyword, setKeyword] = useState('');
  const [toolKeyword, setToolKeyword] = useState('');
  return (
    <Side>
      <PaneBar>
        {['orgBlue', 'factory', 'docs', 'model3'].map((n) => (
          <Small key={n} icon={n} />
        ))}
      </PaneBar>
      <TreeWrap>
        <Tree>
          {blocks.map((b) => (
            <TreeItem key={b} $deep>
              <Icon n='caret' />
              <IconCell><Icon n='block' /></IconCell>
              <span>{b}</span>
            </TreeItem>
          ))}
          <TreeItem $deep $current>
            <i />
            <IconCell $inset><Icon n='seq' /></IconCell>
            <span>Interaction (Request for cruise control ON / OFF)</span>
          </TreeItem>
          <TreeItem $deep>
            <i />
            <IconCell $inset><Icon n='seq' /></IconCell>
            <span>Interaction (follow-up running)</span>
          </TreeItem>
          {['System Physical Design', 'Software Requirement Specifications'].map((t) => (
            <TreeItem key={t}>
              <Icon n='caret' />
              <IconCell $inset><Icon n='model4' /></IconCell>
              <span>{t}</span>
            </TreeItem>
          ))}
        </Tree>
        <ScrollTrack>
          <Icon n='scrollUp' />
          <ScrollThumb $h={143} $top={65} />
          <Icon n='scrollDown' />
        </ScrollTrack>
      </TreeWrap>
      <SearchRow>
        <SearchBox>
          <AbcButton aria-label='Search mode'><Icon n='abc' /></AbcButton>
          <KeywordInput
            aria-label='Search the model'
            placeholder='Keyword'
            value={keyword}
            onChange={(e) => setKeyword(e.target.value)}
          />
        </SearchBox>
        <button aria-label='Tree information'><Icon n='treeInfo' /></button>
      </SearchRow>
      <PaneBar>
        <Small icon='toolbox' name='Toolbox' />
        <SmallButton><FunctionBadge>F</FunctionBadge></SmallButton>
      </PaneBar>
      <PaneTabs>
        <PaneTab $active>New</PaneTab>
        <PaneTab>Reference</PaneTab>
        <PaneTab>Derive</PaneTab>
      </PaneTabs>
      <ToolList>
        {tools.map(([icon, name]) => (
          <ToolItem key={name}>
            <Icon n={icon} />
            <span>{name}</span>
          </ToolItem>
        ))}
      </ToolList>
      <KeywordInput
        $boxed
        aria-label='Search the toolbox'
        placeholder='Keyword'
        value={toolKeyword}
        onChange={(e) => setToolKeyword(e.target.value)}
      />
    </Side>
  );
};

const Diagram = () => (
  <Canvas>
    <Frame>
      <FrameTitle>
        <svg width='298' height='24' viewBox='0 0 298 24' aria-hidden='true'>
          {line('#111', 'M296.500 0v18l-5 5')}
          {line('#777', 'M0 23h292', 2)}
        </svg>
        <p><b>sd</b>Interaction (Request for cruise control ON / OFF)</p>
      </FrameTitle>
    </Frame>
    {lifelines.map((l) => (
      <Lifeline key={l.x} $x={l.x} $w={l.w}>
        <LifelineHead $selected={l.selected}>{l.text}</LifelineHead>
        <LifelineStem />
      </Lifeline>
    ))}
    <Pointer><Icon n='cursor' /></Pointer>
  </Canvas>
);

const Overview = () => (
  <MiniMap>
    <svg width='180' height='130' viewBox='0 0 180 130' role='img' aria-label='Overview'>
      <g {...crisp}>
        <rect x='0.500' y='0.500' width='179' height='129' fill='#fff' stroke='#7d7d7d' />
        <path d='M179 2.500H6.500v95H179' fill='#efefef' stroke='#a3a3a8' />
        <path d='M21.500 123V6.500H158.500' fill='none' stroke='#bcbcbc' />
        <path d='M158.500 7v116.500H21' fill='none' stroke='#dadada' />
        <path d='M33 17h22v8H33zM57 17h26v8H57zM85 17h25v8H85zM112 17h26v8h-26z' fill='#cdcdcd' />
        <path d='M43.500 25v19M69.500 25v19M125.500 25v19' stroke='#e2e2e2' />
        <path d='M97.500 25v19' stroke='#d2d2d2' />
      </g>
    </svg>
  </MiniMap>
);

const App = () => {
  const [zoom, setZoom] = useState(24);
  return (
    <>
      <GlobalStyle />
      <Window>
        <TitleBar>
          <BarButtons>
            {['save', 'open', 'undo', 'redo'].map((n) => (
              <BarButton key={n} aria-label={n}><Icon n={n} /></BarButton>
            ))}
          </BarButtons>
          <Title>ADAS Software Development - Next Design</Title>
          <BarButtons $end>
            {['min', 'max', 'close'].map((n) => (
              <BarButton key={n} $wide aria-label={n}><Icon n={n} /></BarButton>
            ))}
          </BarButtons>
        </TitleBar>
        <MenuRow>
          <MenuList>
            {menus.map((m) => (
              <li key={m}>
                <MenuLink href='#' $active={m === 'Home'} $blue={m === 'Sequence Diagram'}>{m}</MenuLink>
              </li>
            ))}
          </MenuList>
          <MenuButtons>
            <FramedButton aria-label='Comments'><Icon n='comment' /></FramedButton>
            <FramedButton aria-label='Hide ribbon'><Icon n='chevronUpBlue' /></FramedButton>
          </MenuButtons>
        </MenuRow>
        <RibbonBar />
        <Main>
          <SidePanel />
          <Editor>
            <DocTabs>
              <DocTab $active><Icon n='seqLight' />Interaction (Request...ntrol ON / OFF)</DocTab>
              <DocTab><Icon n='traceTab' />Trace</DocTab>
              <TabsMore aria-label='All tabs'><Icon n='chevron' /></TabsMore>
            </DocTabs>
            <NavRow>
              <ModelBadge>M</ModelBadge>
              <button aria-label='Back'><Icon n='back' /></button>
              <button aria-label='Forward'><Icon n='forward' /></button>
              <Crumbs>
                <li>«</li>
                <li><a href='#'>System Functional Structure</a></li>
                <li><Icon n='crumb' /><a href='#'>Adaptive Cruise Control System</a></li>
                <li><Icon n='crumb' /><a href='#'>Interaction (Request for cruise control ON / OFF)</a></li>
              </Crumbs>
              <TypeButton>SequenceDiagram</TypeButton>
            </NavRow>
            <Workspace>
              <Palettes>
                <Palette>
                  {tools.map(([icon, name]) => (
                    <PaletteButton key={name} aria-label={name}><Icon n={icon} /></PaletteButton>
                  ))}
                </Palette>
                <Palette $tall>
                  <PaletteButton $picked aria-label='Select'><Icon n='pointer' /></PaletteButton>
                  <PaletteButton aria-label='Adjust space'><Icon n='space' /></PaletteButton>
                  <PaletteRule />
                  {['sync', 'async', 'reply', 'create', 'destroy'].map((n) => (
                    <PaletteButton key={n} aria-label={n}><Icon n={n} /></PaletteButton>
                  ))}
                </Palette>
              </Palettes>
              <Diagram />
              <ScrollTrack $wide>
                <Icon n='scrollUp' />
                <ScrollThumb $h={73} $top={7} />
                <Icon n='scrollDown' />
              </ScrollTrack>
            </Workspace>
            <Overview />
            <Handle aria-label='Collapse side panel'><Icon n='collapse' /></Handle>
            <Handle $right aria-label='Open inspector'><Icon n='collapse' /></Handle>
          </Editor>
        </Main>
        <StatusBar>
          <StatusButton $on aria-label='Left pane'><Icon n='paneLeft' /></StatusButton>
          <StatusButton aria-label='Bottom pane'><Icon n='paneBottom' /></StatusButton>
          <StatusButton aria-label='Right pane'><Icon n='paneRight' /></StatusButton>
          <StatusButton aria-label='Models'><Icon n='cubes' /></StatusButton>
          <StatusButton aria-label='View settings'><Icon n='gearPane' /></StatusButton>
          <ZoomLabel>100%</ZoomLabel>
          <StatusButton aria-label='Zoom out'><Icon n='minus' /></StatusButton>
          <Slider type='range' aria-label='Zoom' value={zoom} onChange={(e) => setZoom(Number(e.target.value))} />
          <StatusButton aria-label='Zoom in'><Icon n='plus' /></StatusButton>
          <StatusButton $wide aria-label='Fit'><Icon n='move' /></StatusButton>
          <StatusButton $wide aria-label='Notifications'><Icon n='bell' /></StatusButton>
          <Icon n='grip' />
        </StatusBar>
      </Window>
    </>
  );
};

export default App;
